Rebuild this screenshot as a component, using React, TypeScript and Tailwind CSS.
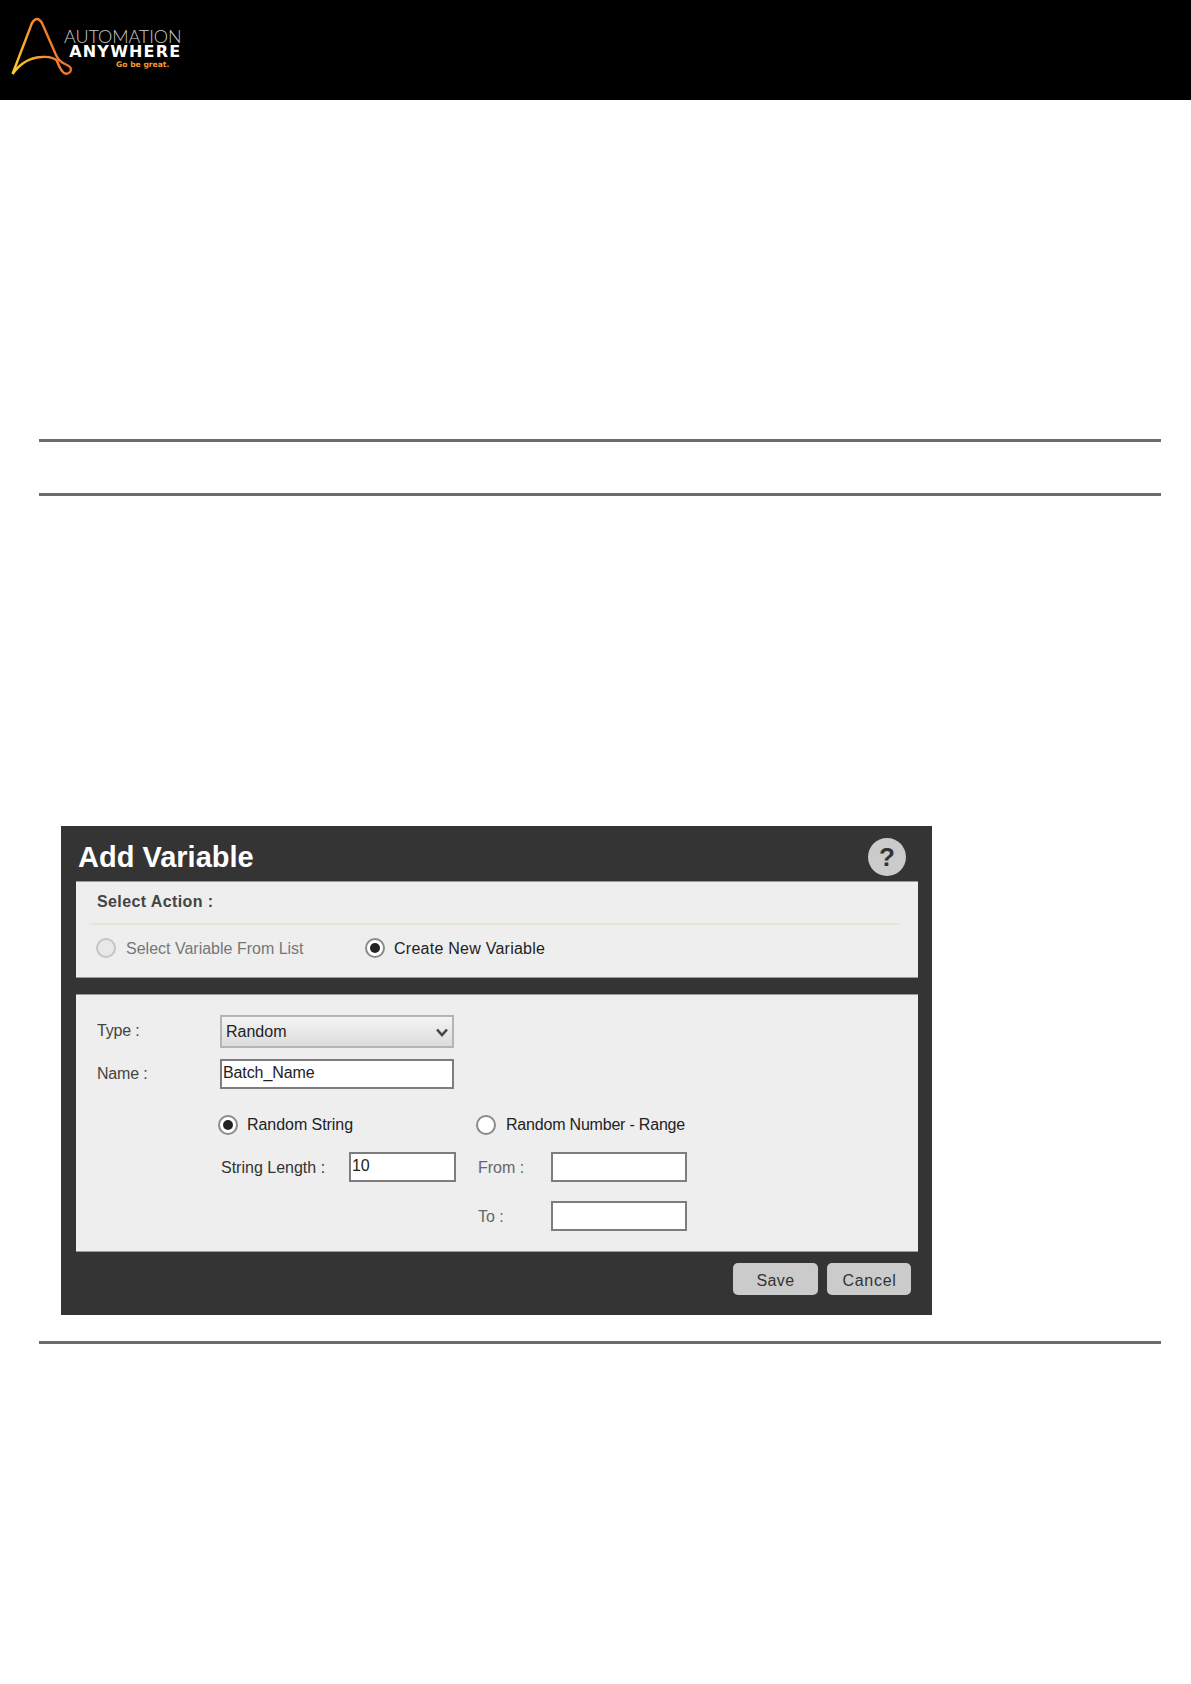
import React from 'react';

const font = { fontFamily: '"Liberation Sans", Arial, sans-serif' };

function Radio({ checked, disabled }: { checked?: boolean; disabled?: boolean }) {
  return (
    <span className={`flex h-5 w-5 shrink-0 items-center justify-center rounded-full border-2 ${disabled ? 'border-[#c4c4c4] bg-[#e8e8e8]' : 'border-[#8a8a8a] bg-white'}`}>
      {checked && <span className="h-[10px] w-[10px] rounded-full bg-[#222]" />}
    </span>
  );
}

function Field({ value, className }: { value?: string; className: string }) {
  return (
    <input
      readOnly
      value={value ?? ''}
      className={`block border-2 border-[#7d7d7d] bg-white pb-[3px] pl-[1px] text-[16px] leading-none tracking-[-0.1px] text-[#222] outline-none ${className}`}
    />
  );
}

function Logo() {
  return (
    <div className="flex items-start pl-[11px] pt-[15px]">
      <svg width="62" height="64" viewBox="0 0 62 64" fill="none">
        <defs>
          <linearGradient id="aa" x1="0" y1="1" x2="1" y2="0.6">
            <stop offset="0" stopColor="#fcd02c" />
            <stop offset="0.5" stopColor="#f89a2c" />
            <stop offset="1" stopColor="#ef5f2b" />
          </linearGradient>
        </defs>
        <path
          d="M1.5 59 L21 8 Q26 0 31 8 L45 40 Q48 47 56 50 Q62 53 59 57 Q55 61 51 56 Q48 52 46 46 Q42 41 30 42 Q13 43 1.5 59"
          stroke="url(#aa)"
          strokeWidth="2.4"
          strokeLinejoin="round"
        />
      </svg>
      <div className="ml-[-9px] flex flex-col items-end pt-[13px] text-white">
        <span className="text-[18px] font-light leading-[16px] tracking-[-0.1px] text-[#c8c8c8]" style={{ fontFamily: 'Lato, sans-serif' }}>AUTOMATION</span>
        <span className="mt-[1px] text-[16px] font-bold leading-[14px] tracking-[1.2px]" style={{ fontFamily: '"DejaVu Sans", sans-serif' }}>ANYWHERE</span>
        <span className="mr-[12px] mt-[1px] text-[7.6px] font-bold leading-[10px] text-[#f39a2d]" style={{ fontFamily: '"DejaVu Sans", sans-serif' }}>Go be great.</span>
      </div>
    </div>
  );
}

export default function App() {
  return (
    <div className="min-h-[1684px] bg-white" style={font}>
      <header className="h-[100px] bg-black">
        <Logo />
      </header>

      <div className="px-[39px] pr-[30px]">
        <hr className="mt-[339px] h-[3px] border-0 bg-[#6b6b6b]" />
        <hr className="mt-[51px] h-[3px] border-0 bg-[#6b6b6b]" />

        {/* Add Variable dialog */}
        <div className="ml-[22px] mt-[330px] h-[489px] w-[871px] bg-[#343434]">
          <div className="flex h-[55px] items-center justify-between pl-[17px] pr-[26px]">
            <h2 className="mt-[7px] text-[29px] font-bold leading-none text-white">Add Variable</h2>
            <span className="mt-[7px] flex h-[38px] w-[38px] items-center justify-center rounded-full bg-[#cbcbcb] text-[26px] font-bold text-[#333]">?</span>
          </div>

          <div className="ml-[15px] h-[97px] w-[842px] border-y border-[#999] bg-[#eeeeee] text-[16px]">
            <div className="ml-[13px] mr-[18px] h-[43px] border-b-2 border-[#e6e6d8] pl-[8px] pt-[10px] font-bold leading-[19px] tracking-[0.4px] text-[#444]">Select Action :</div>
            <div className="flex items-center pl-[20px] pt-[12px] leading-5">
              <Radio disabled />
              <span className="ml-[10px] mt-[2px] w-[239px] text-[#777]">Select Variable From List</span>
              <Radio checked />
              <span className="ml-[9px] mt-[2px] tracking-[0.25px] text-[#222]">Create New Variable</span>
            </div>
          </div>

          <div className="ml-[15px] mt-[16px] h-[258px] w-[842px] border-y border-[#999] bg-[#eeeeee] pl-[21px] text-[16px] text-[#444]">
            <div className="mt-[20px] flex items-center">
              <span className="mt-[-2px] w-[123px] tracking-[-0.2px]">Type :</span>
              <div className="flex h-[33px] w-[234px] items-center justify-between border-2 border-[#b4b4b4] bg-gradient-to-b from-[#f4f4f4] to-[#dcdcdc] pl-[4px] pr-[3px] text-[#222]">
                <span>Random</span>
                <svg width="14" height="10" viewBox="0 0 14 10" fill="none">
                  <path d="M2 2.5 L7 8 L12 2.5" stroke="#444" strokeWidth="2.6" />
                </svg>
              </div>
            </div>
            <div className="mt-[11px] flex items-center">
              <span className="w-[123px] tracking-[-0.2px]">Name :</span>
              <Field value="Batch_Name" className="h-[30px] w-[234px]" />
            </div>

            <div className="ml-[121px] mt-[25px] flex">
              <div className="w-[258px]">
                <div className="flex items-center leading-5">
                  <Radio checked />
                  <span className="ml-[9px] mt-[1px] tracking-[-0.05px] text-[#222]">Random String</span>
                </div>
                <div className="mt-[17px] flex items-center pl-[3px]">
                  <span className="mt-[1px] w-[128px] text-[#333]">String Length :</span>
                  <Field value="10" className="h-[30px] w-[107px]" />
                </div>
              </div>
              <div>
                <div className="flex items-center leading-5">
                  <Radio />
                  <span className="ml-[10px] mt-[1px] tracking-[-0.2px] text-[#222]">Random Number - Range</span>
                </div>
                <div className="mt-[17px] flex items-center pl-[2px]">
                  <span className="mt-[1px] w-[73px] text-[#666]">From :</span>
                  <Field className="h-[30px] w-[136px]" />
                </div>
                <div className="mt-[19px] flex items-center pl-[2px]">
                  <span className="mt-[1px] w-[73px] text-[#666]">To :</span>
                  <Field className="h-[30px] w-[136px]" />
                </div>
              </div>
            </div>
          </div>

          <div className="mr-[21px] mt-[11px] flex justify-end gap-[9px]">
            <button className="h-[32px] w-[85px] rounded-[5px] bg-[#cbcbcb] pt-[3px] text-[16px] tracking-[0.4px] text-[#333]">Save</button>
            <button className="h-[32px] w-[84px] rounded-[5px] bg-[#cbcbcb] pl-[1px] pt-[3px] text-[16px] tracking-[0.7px] text-[#333]">Cancel</button>
          </div>
        </div>

        <hr className="mt-[26px] h-[3px] border-0 bg-[#6b6b6b]" />
      </div>
    </div>
  );
}
